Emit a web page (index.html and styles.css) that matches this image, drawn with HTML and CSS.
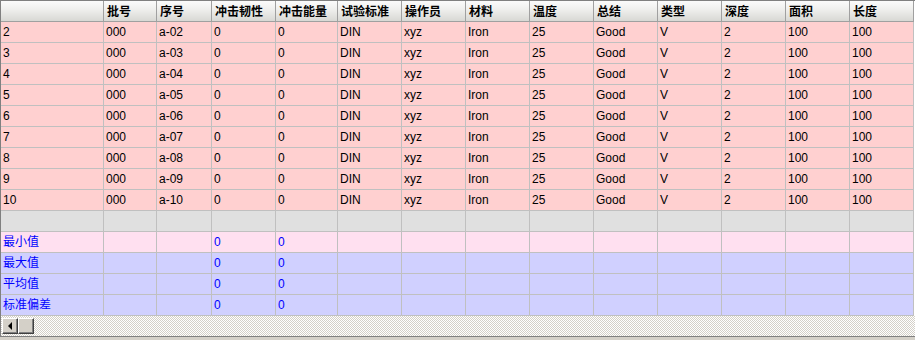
FILE: index.html
```html
<!DOCTYPE html>
<html>
<head>
<meta charset="utf-8">
<link rel="stylesheet" href="styles.css">
</head>
<body>
<div class="grid-frame">
  <div class="grid">
    <div class="hc"></div><div class="hc">批号</div><div class="hc">序号</div><div class="hc">冲击韧性</div><div class="hc">冲击能量</div><div class="hc">试验标准</div><div class="hc">操作员</div><div class="hc">材料</div><div class="hc">温度</div><div class="hc">总结</div><div class="hc">类型</div><div class="hc">深度</div><div class="hc">面积</div><div class="hc">长度</div>

    <div class="c d">2</div><div class="c d">000</div><div class="c d">a-02</div><div class="c d">0</div><div class="c d">0</div><div class="c d">DIN</div><div class="c d">xyz</div><div class="c d">Iron</div><div class="c d">25</div><div class="c d">Good</div><div class="c d">V</div><div class="c d">2</div><div class="c d">100</div><div class="c d">100</div>
    <div class="c d">3</div><div class="c d">000</div><div class="c d">a-03</div><div class="c d">0</div><div class="c d">0</div><div class="c d">DIN</div><div class="c d">xyz</div><div class="c d">Iron</div><div class="c d">25</div><div class="c d">Good</div><div class="c d">V</div><div class="c d">2</div><div class="c d">100</div><div class="c d">100</div>
    <div class="c d">4</div><div class="c d">000</div><div class="c d">a-04</div><div class="c d">0</div><div class="c d">0</div><div class="c d">DIN</div><div class="c d">xyz</div><div class="c d">Iron</div><div class="c d">25</div><div class="c d">Good</div><div class="c d">V</div><div class="c d">2</div><div class="c d">100</div><div class="c d">100</div>
    <div class="c d">5</div><div class="c d">000</div><div class="c d">a-05</div><div class="c d">0</div><div class="c d">0</div><div class="c d">DIN</div><div class="c d">xyz</div><div class="c d">Iron</div><div class="c d">25</div><div class="c d">Good</div><div class="c d">V</div><div class="c d">2</div><div class="c d">100</div><div class="c d">100</div>
    <div class="c d">6</div><div class="c d">000</div><div class="c d">a-06</div><div class="c d">0</div><div class="c d">0</div><div class="c d">DIN</div><div class="c d">xyz</div><div class="c d">Iron</div><div class="c d">25</div><div class="c d">Good</div><div class="c d">V</div><div class="c d">2</div><div class="c d">100</div><div class="c d">100</div>
    <div class="c d">7</div><div class="c d">000</div><div class="c d">a-07</div><div class="c d">0</div><div class="c d">0</div><div class="c d">DIN</div><div class="c d">xyz</div><div class="c d">Iron</div><div class="c d">25</div><div class="c d">Good</div><div class="c d">V</div><div class="c d">2</div><div class="c d">100</div><div class="c d">100</div>
    <div class="c d">8</div><div class="c d">000</div><div class="c d">a-08</div><div class="c d">0</div><div class="c d">0</div><div class="c d">DIN</div><div class="c d">xyz</div><div class="c d">Iron</div><div class="c d">25</div><div class="c d">Good</div><div class="c d">V</div><div class="c d">2</div><div class="c d">100</div><div class="c d">100</div>
    <div class="c d">9</div><div class="c d">000</div><div class="c d">a-09</div><div class="c d">0</div><div class="c d">0</div><div class="c d">DIN</div><div class="c d">xyz</div><div class="c d">Iron</div><div class="c d">25</div><div class="c d">Good</div><div class="c d">V</div><div class="c d">2</div><div class="c d">100</div><div class="c d">100</div>
    <div class="c d">10</div><div class="c d">000</div><div class="c d">a-10</div><div class="c d">0</div><div class="c d">0</div><div class="c d">DIN</div><div class="c d">xyz</div><div class="c d">Iron</div><div class="c d">25</div><div class="c d">Good</div><div class="c d">V</div><div class="c d">2</div><div class="c d">100</div><div class="c d">100</div>

    <div class="c g"></div><div class="c g"></div><div class="c g"></div><div class="c g"></div><div class="c g"></div><div class="c g"></div><div class="c g"></div><div class="c g"></div><div class="c g"></div><div class="c g"></div><div class="c g"></div><div class="c g"></div><div class="c g"></div><div class="c g"></div>

    <div class="c mn">最小值</div><div class="c mn"></div><div class="c mn"></div><div class="c mn">0</div><div class="c mn">0</div><div class="c mn"></div><div class="c mn"></div><div class="c mn"></div><div class="c mn"></div><div class="c mn"></div><div class="c mn"></div><div class="c mn"></div><div class="c mn"></div><div class="c mn"></div>
    <div class="c st">最大值</div><div class="c st"></div><div class="c st"></div><div class="c st">0</div><div class="c st">0</div><div class="c st"></div><div class="c st"></div><div class="c st"></div><div class="c st"></div><div class="c st"></div><div class="c st"></div><div class="c st"></div><div class="c st"></div><div class="c st"></div>
    <div class="c st">平均值</div><div class="c st"></div><div class="c st"></div><div class="c st">0</div><div class="c st">0</div><div class="c st"></div><div class="c st"></div><div class="c st"></div><div class="c st"></div><div class="c st"></div><div class="c st"></div><div class="c st"></div><div class="c st"></div><div class="c st"></div>
    <div class="c st">标准偏差</div><div class="c st"></div><div class="c st"></div><div class="c st">0</div><div class="c st">0</div><div class="c st"></div><div class="c st"></div><div class="c st"></div><div class="c st"></div><div class="c st"></div><div class="c st"></div><div class="c st"></div><div class="c st"></div><div class="c st"></div>
  </div>
  <div class="hscroll">
    <div class="sb-btn"><span class="arrow-left"></span></div>
    <div class="sb-thumb"></div>
    <div class="sb-track"></div>
  </div>
</div>
</body>
</html>
```
FILE: styles.css
```css
html, body {
  margin: 0;
  padding: 0;
  background: #d4d0c8;
}
.grid-frame {
  width: 915px;
  height: 337px;
  box-sizing: border-box;
  border-top: 1px solid #808080;
  border-left: 1px solid #808080;
  border-bottom: 1px solid #808080;
  background: #ffffff;
  display: flex;
  flex-direction: column;
  font-family: "Liberation Sans", "Noto Sans CJK SC", sans-serif;
  font-size: 12px;
}
.grid {
  display: grid;
  grid-template-columns: 103px 53px 55px 64px 62px repeat(9, 64px);
  grid-template-rows: 21px;
  grid-auto-rows: 21px;
}
.hc {
  box-sizing: border-box;
  border-right: 1px solid #a0a0a0;
  border-bottom: 1px solid #a0a0a0;
  background: linear-gradient(#fbfbfb, #f0f0ee 40%, #d8d8d4);
  font-weight: bold;
  color: #000;
  padding: 3px 0 0 3px;
  line-height: 16px;
  white-space: nowrap;
  overflow: hidden;
}
.c {
  box-sizing: border-box;
  border-right: 1px solid #c0c0c0;
  border-bottom: 1px solid #c0c0c0;
  padding: 3px 0 0 2px;
  line-height: 15px;
  white-space: nowrap;
  overflow: hidden;
}
.d {
  background: #ffd0d0;
  color: #000;
}
.g {
  background: #e0e0e0;
}
.mn {
  background: #ffe0f0;
  color: #0000ff;
}
.st {
  background: #d0d0ff;
  color: #0000ff;
}
.hscroll {
  height: 20px;
  display: flex;
  align-items: center;
  padding-left: 1px;
  background: repeating-conic-gradient(#d4d0c8 0 25%, #ffffff 0 50%) 0 0 / 2px 2px;
}
.sb-btn, .sb-thumb {
  box-sizing: border-box;
  width: 16px;
  height: 16px;
  background: #d4d0c8;
  border-top: 1px solid #ffffff;
  border-left: 1px solid #ffffff;
  border-right: 1px solid #404040;
  border-bottom: 1px solid #404040;
  box-shadow: inset -1px -1px 0 #808080;
  display: flex;
  align-items: center;
  justify-content: center;
}
.arrow-left {
  width: 0;
  height: 0;
  border-top: 4px solid transparent;
  border-bottom: 4px solid transparent;
  border-right: 4px solid #000;
  margin-left: -1px;
}
.sb-track {
  flex: 1;
}
```
